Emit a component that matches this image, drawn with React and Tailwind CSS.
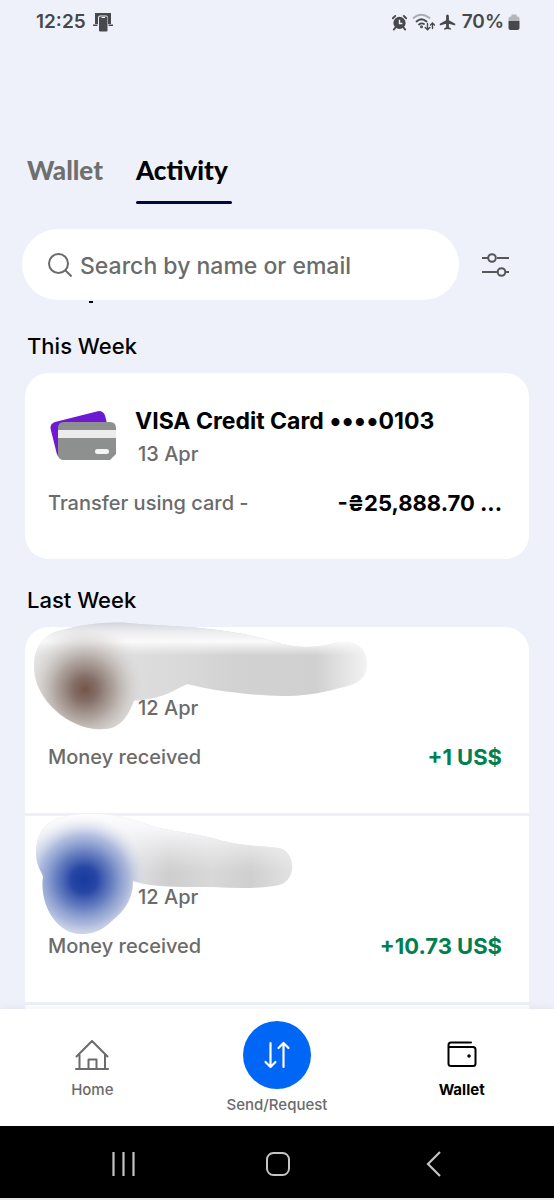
import React, { useState } from 'react';

const weeks = [
  {
    title: 'This Week',
    items: [
      {
        id: 1,
        name: 'VISA Credit Card ',
        digits: '0103',
        date: '13 Apr',
        note: 'Transfer using card -',
        amount: '-₴25,888.70 ...',
        kind: 'card',
      },
    ],
  },
  {
    title: 'Last Week',
    loadingMore: true,
    items: [
      { id: 2, date: '12 Apr', note: 'Money received', amount: '+1 US$', kind: 'brown', income: true },
      { id: 3, date: '12 Apr', note: 'Money received', amount: '+10.73 US$', kind: 'blue', income: true },
    ],
  },
];

const StatusBar = () => (
  <div className="flex h-11 shrink-0 items-center justify-between pl-9 pr-[34px] font-['Inter',sans-serif] text-[19px] font-semibold text-[#46484c]">
    <div className="flex items-center gap-[7px]">
      <span>12:25</span>
      <svg width="20" height="20" viewBox="0 0 20 20" fill="currentColor">
        <path d="M2 1h16v11h-3V5.500q0-2-2-2H7q-2 0-2 2V12H2z" />
        <path d="M0 12.500h4.500v1.500H0zM15.500 12.500H20v1.500h-4.500z" />
        <rect x="6" y="4.500" width="8.500" height="15" rx="1.200" />
        <path d="M8.500 5.500h3.500" stroke="#eef1f9" strokeWidth="1" />
      </svg>
    </div>
    <div className="flex items-center gap-1">
      <svg width="17" height="17" viewBox="0 0 18 18" fill="none" stroke="currentColor">
        <circle cx="9" cy="9.500" r="6.500" fill="currentColor" stroke="none" />
        <path d="M2 4.500 4.500 2M16 4.500 13.500 2" strokeWidth="2" strokeLinecap="round" />
        <path d="M4.500 14.500 3 16.500M13.500 14.500 15 16.500" strokeWidth="2" strokeLinecap="round" />
        <path d="M9 6v4h3" stroke="#eef1f9" strokeWidth="1.500" />
      </svg>
      <svg width="23" height="18" viewBox="0 0 23 18" fill="none" stroke="currentColor" strokeWidth="1.800" strokeLinecap="round">
        <path d="M1.500 5Q9 -1.500 17.500 5" stroke="#a9abb2" />
        <path d="M4.500 8.500Q9.500 4 14.500 8.500M7 11.500Q9.500 9.500 12 11" />
        <circle cx="9.500" cy="13.800" r=".6" />
        <path d="M15.500 10.500v6M13.200 14.500l2.300 2.200 2.300-2.200M20.500 15.500v-5.500M18.500 12l2-2 2 2" strokeWidth="1.400" />
      </svg>
      <svg width="17" height="18" viewBox="0 0 17 18" fill="currentColor">
        <path d="M8.500 1.500c.9 0 1.400.9 1.400 2v3.700l6.300 3.600v1.700L9.900 10.800v3.400l2 1.400v1.200l-3.400-.8-3.400.8v-1.200l2-1.400v-3.400L.8 12.500v-1.700l6.300-3.600V3.500c0-1.100.5-2 1.400-2z" />
      </svg>
      <span className="pl-0.5">70%</span>
      <svg width="12" height="18" viewBox="0 0 12 18">
        <path d="M3.500 1.500h5v2h1q2 0 2 2V8H.5V5.500q0-2 2-2h1z" fill="#b4b6bb" />
        <path d="M.5 8h11v7q0 2-2 2h-7q-2 0-2-2z" fill="currentColor" />
      </svg>
    </div>
  </div>
);

const CardPicture = () => (
  <svg width="68" height="52" viewBox="0 0 68 52" className="block">
    <rect x="4" y="6" width="56" height="37" rx="6" fill="#6f19d2" transform="rotate(-14 32 25)" />
    <path d="M15 12h46q6 0 6 6v26l-6 6H15q-6 0-6-6V18q0-6 6-6z" fill="#8e9090" />
    <path d="M9 20h58v8H9z" fill="#ececec" />
    <rect x="46" y="39" width="14" height="5" rx="2.500" fill="#f3f3f3" />
  </svg>
);

// Smudges painted over the sender's photo and name
const BrownSmudge = () => (
  <svg width="336" height="112" viewBox="0 0 336 110" preserveAspectRatio="none" className="pointer-events-none absolute -top-1.5 left-2">
    <defs>
      <clipPath id="brown-clip">
        <path d="M1 48C0 26 10 13 28 9C50 3 82-1 106 3C160 6 200 8 240 20C262 27 280 27 300 22C316 18 334 22 334 42C334 58 324 62 306 66C270 76 240 75 200 70C180 68 165 64 154 62C142 67 130 77 101 78C94 96 86 106 70 106C40 109 3 80 1 48Z" />
      </clipPath>
      <linearGradient id="brown-tail" x1="0" x2="336" y1="0" y2="0" gradientUnits="userSpaceOnUse">
        <stop offset="0" stopColor="#e4e5e6" />
        <stop offset=".45" stopColor="#d9d9d9" />
        <stop offset=".6" stopColor="#d2d2d2" />
        <stop offset=".84" stopColor="#d0d0d0" />
        <stop offset="1" stopColor="#f4f4f4" />
      </linearGradient>
      <linearGradient id="brown-top" x1="0" x2="0" y1="0" y2="34" gradientUnits="userSpaceOnUse">
        <stop offset="0" stopColor="#cfd1d8" />
        <stop offset=".3" stopColor="#ececef" />
        <stop offset=".6" stopColor="#fafafa" />
        <stop offset="1" stopColor="#f4f4f4" stopOpacity="0" />
      </linearGradient>
      <radialGradient id="brown-head" cx="52" cy="67" r="64" gradientUnits="userSpaceOnUse">
        <stop offset="0" stopColor="#735547" />
        <stop offset=".2" stopColor="#86706a" />
        <stop offset=".45" stopColor="#a99c95" stopOpacity=".9" />
        <stop offset=".72" stopColor="#cdc8c4" stopOpacity=".6" />
        <stop offset="1" stopColor="#e6e6e6" stopOpacity="0" />
      </radialGradient>
    </defs>
    <g clipPath="url(#brown-clip)">
      <path d="M0 0h336v110H0z" fill="url(#brown-tail)" />
      <path d="M0 0h336v34H0z" fill="url(#brown-top)" />
      <path d="M0 0h130v110H0z" fill="url(#brown-head)" />
    </g>
  </svg>
);

const BlueSmudge = () => (
  <svg width="262" height="124" viewBox="0 0 262 124" className="pointer-events-none absolute -top-1 left-2">
    <defs>
      <clipPath id="blue-clip">
        <path d="M3 42C3 18 14 4 48 2C84 0 100 8 126 16C150 21 168 22 190 29C210 34 230 34 246 36C264 40 265 73 241 74C220 77 200 76 180 75C150 75 120 76 100 69C100 88 90 100 80 108C68 120 58 122 48 122C26 122 6 96 10 64C6 56 3 50 3 42Z" />
      </clipPath>
      <linearGradient id="blue-tail" x1="0" x2="262" y1="0" y2="0" gradientUnits="userSpaceOnUse">
        <stop offset="0" stopColor="#d8dff0" />
        <stop offset=".38" stopColor="#e0e1e5" />
        <stop offset=".52" stopColor="#cecece" />
        <stop offset=".68" stopColor="#d8d8d8" />
        <stop offset=".83" stopColor="#cfcfcf" />
        <stop offset="1" stopColor="#e3e3e3" />
      </linearGradient>
      <linearGradient id="blue-top" x1="0" x2="0" y1="0" y2="60" gradientUnits="userSpaceOnUse">
        <stop offset="0" stopColor="#fdfdfd" />
        <stop offset=".25" stopColor="#f8f8fa" />
        <stop offset="1" stopColor="#f0f0f3" stopOpacity="0" />
      </linearGradient>
      <radialGradient id="blue-head" cx="51" cy="68" r="64" gradientUnits="userSpaceOnUse">
        <stop offset="0" stopColor="#173a9d" />
        <stop offset=".2" stopColor="#2746a5" />
        <stop offset=".45" stopColor="#5e78bd" stopOpacity=".9" />
        <stop offset=".7" stopColor="#97a8d6" stopOpacity=".7" />
        <stop offset="1" stopColor="#dfe3ee" stopOpacity="0" />
      </radialGradient>
    </defs>
    <g clipPath="url(#blue-clip)">
      <path d="M0 0h262v124H0z" fill="url(#blue-tail)" />
      <path d="M0 0h262v60H0z" fill="url(#blue-top)" />
      <path d="M0 0h130v124H0z" fill="url(#blue-head)" />
    </g>
  </svg>
);

const ActivityRow = ({ item }) => (
  <li className="relative border-b-[3px] border-[#edf0f7] pb-10 pl-[23px] pr-[27px] pt-8 last:border-b-0">
    <div className="flex gap-[18px]">
      <div className="flex w-[69px] shrink-0 justify-end pt-[5px]">
        {item.kind === 'card' && <CardPicture />}
      </div>
      <div className="min-w-0 flex-1">
        <h3 className="flex h-8 items-center whitespace-pre text-[23px] font-bold leading-8 text-black">
          {item.name}
          {item.digits && <span className="text-[26px] leading-8">••••</span>}
          {item.digits}
        </h3>
        <p className="pl-[3px] text-xl leading-[34px] text-[#6b6b6b]">{item.date}</p>
      </div>
    </div>
    <div className="mt-4 flex items-center justify-between leading-8">
      <p className="text-xl leading-8 text-[#6b6b6b]">{item.note}</p>
      <p className={`text-[22px] font-bold leading-8 ${item.income ? 'text-[#00804f]' : 'text-black'}`}>
        {item.amount}
      </p>
    </div>
    {item.kind === 'brown' && <BrownSmudge />}
    {item.kind === 'blue' && <BlueSmudge />}
  </li>
);

const App = () => {
  const [tab, setTab] = useState('Activity');
  const [search, setSearch] = useState('');

  return (
    <div className="flex h-screen flex-col bg-[#eef1f9] font-['Inter',sans-serif] font-medium">
      <StatusBar />

      {/* Tabs */}
      <div className="mt-[106px] flex gap-[29px] pl-[27px]">
        {['Wallet', 'Activity'].map((t) => (
          <button
            key={t}
            onClick={() => setTab(t)}
            className="flex h-[54px] cursor-pointer flex-col justify-between"
          >
            <span
              className={`pr-1 font-['Lato',sans-serif] text-[26px] font-black leading-10 ${
                tab === t ? 'text-black' : 'text-[#6f6f6f]'
              }`}
            >
              {t}
            </span>
            <span className={`h-[3px] w-full rounded-full ${tab === t ? 'bg-[#00093a]' : ''}`} />
          </button>
        ))}
      </div>

      {/* Search */}
      <div className="mt-[25px] flex items-center gap-[21px] pl-[22px] pr-[42px]">
        <label className="flex h-[71px] min-w-0 flex-1 items-center gap-2 rounded-full bg-white px-[26px] text-[#6b6b6b]">
          <svg width="24" height="24" viewBox="0 0 24 24" fill="none" stroke="currentColor" strokeWidth="2" className="shrink-0">
            <circle cx="10.500" cy="10.500" r="9.500" />
            <path d="m17.500 17.500 6 6" />
          </svg>
          <input
            type="text"
            value={search}
            onChange={(e) => setSearch(e.target.value)}
            placeholder="Search by name or email"
            aria-label="Search by name or email"
            className="min-w-0 flex-1 pt-1 text-[23px] placeholder:text-[#6b6b6b] focus:outline-none"
          />
        </label>
        <button aria-label="Filters" className="cursor-pointer text-[#545657]">
          <svg width="32" height="28" viewBox="0 0 32 28" fill="none" stroke="currentColor" strokeWidth="2">
            <path d="M2 7h7M17 7h12M2 21h16M26 21h3" />
            <circle cx="12" cy="7" r="3.800" />
            <circle cx="21.500" cy="21" r="3.800" />
          </svg>
        </button>
      </div>

      {/* Activity list */}
      <main className="relative min-h-0 flex-1 overflow-hidden px-[25px] pt-[5px]">
        <span className="absolute left-[89px] top-px h-0.5 w-1 bg-black" />
        {weeks.map((week) => (
          <section key={week.title}>
            <h2 className="pb-[11px] pl-0.5 pt-[25px] text-[22px] leading-8 text-black">{week.title}</h2>
            <ul className="rounded-3xl bg-white">
              {week.items.map((item) => (
                <ActivityRow key={item.id} item={item} />
              ))}
              {week.loadingMore && <li className="h-48" />}
            </ul>
          </section>
        ))}
      </main>

      {/* Bottom navigation */}
      <nav className="relative grid h-[117px] shrink-0 grid-cols-3 bg-white text-[15px] leading-5 text-[#6b6b6b] shadow-[0_-2px_8px_rgba(0,0,0,0.05)]">
        <button className="flex cursor-pointer flex-col items-center gap-2 pt-[29px]">
          <svg width="36" height="34" viewBox="0 0 36 34" fill="none" stroke="currentColor" strokeWidth="2" strokeLinecap="round" strokeLinejoin="round">
            <path d="M2 31h32M5.500 31V16.500M31 31V16.500M2.500 18.500 18 3l15.500 15.500M14.500 31v-9.500h8V31" />
          </svg>
          <span>Home</span>
        </button>
        <button className="flex cursor-pointer flex-col items-center gap-1.5 pt-3">
          <span className="flex size-[68px] items-center justify-center rounded-full bg-[#0066f5] text-white">
            <svg width="28" height="28" viewBox="0 0 28 28" fill="none" stroke="currentColor" strokeWidth="2.200" strokeLinecap="round" strokeLinejoin="round">
              <path d="M7.500 2v24M2.500 21l5 5 5-5M20.500 26V2M15.500 7l5-5 5 5" />
            </svg>
          </span>
          <span>Send/Request</span>
        </button>
        <button className="flex cursor-pointer flex-col items-center gap-2 pt-[29px] font-bold text-black">
          <svg width="34" height="34" viewBox="0 0 34 34" fill="none" stroke="currentColor" strokeWidth="2" strokeLinecap="round" strokeLinejoin="round">
            <path d="M26 4.500H6Q3.500 4.500 3.500 7v18.500Q3.500 28 6 28h22q2.500 0 2.500-2.500V11.500Q30.500 9 28 9H3.500" />
            <circle cx="24" cy="18" r="1.800" fill="currentColor" stroke="none" />
          </svg>
          <span>Wallet</span>
        </button>
      </nav>

      {/* System buttons */}
      <div className="flex h-[74px] shrink-0 items-center justify-between border-b-2 border-[#e8e8e8] bg-black px-[110px] pt-1 text-[#c4c4c4]">
        <button aria-label="Recents" className="cursor-pointer">
          <svg width="26" height="26" viewBox="0 0 26 26" stroke="currentColor" strokeWidth="2.200">
            <path d="M3.500 1v24M13.500 1v24M23.500 1v24" />
          </svg>
        </button>
        <button aria-label="Home screen" className="cursor-pointer">
          <svg width="26" height="26" viewBox="0 0 26 26" fill="none" stroke="currentColor" strokeWidth="2">
            <rect x="3" y="2" width="22" height="22" rx="6.500" />
          </svg>
        </button>
        <button aria-label="Back" className="cursor-pointer">
          <svg width="26" height="26" viewBox="0 0 26 26" fill="none" stroke="currentColor" strokeWidth="2.200">
            <path d="M22 1 10 13l12 12" />
          </svg>
        </button>
      </div>
    </div>
  );
};

export default App;
